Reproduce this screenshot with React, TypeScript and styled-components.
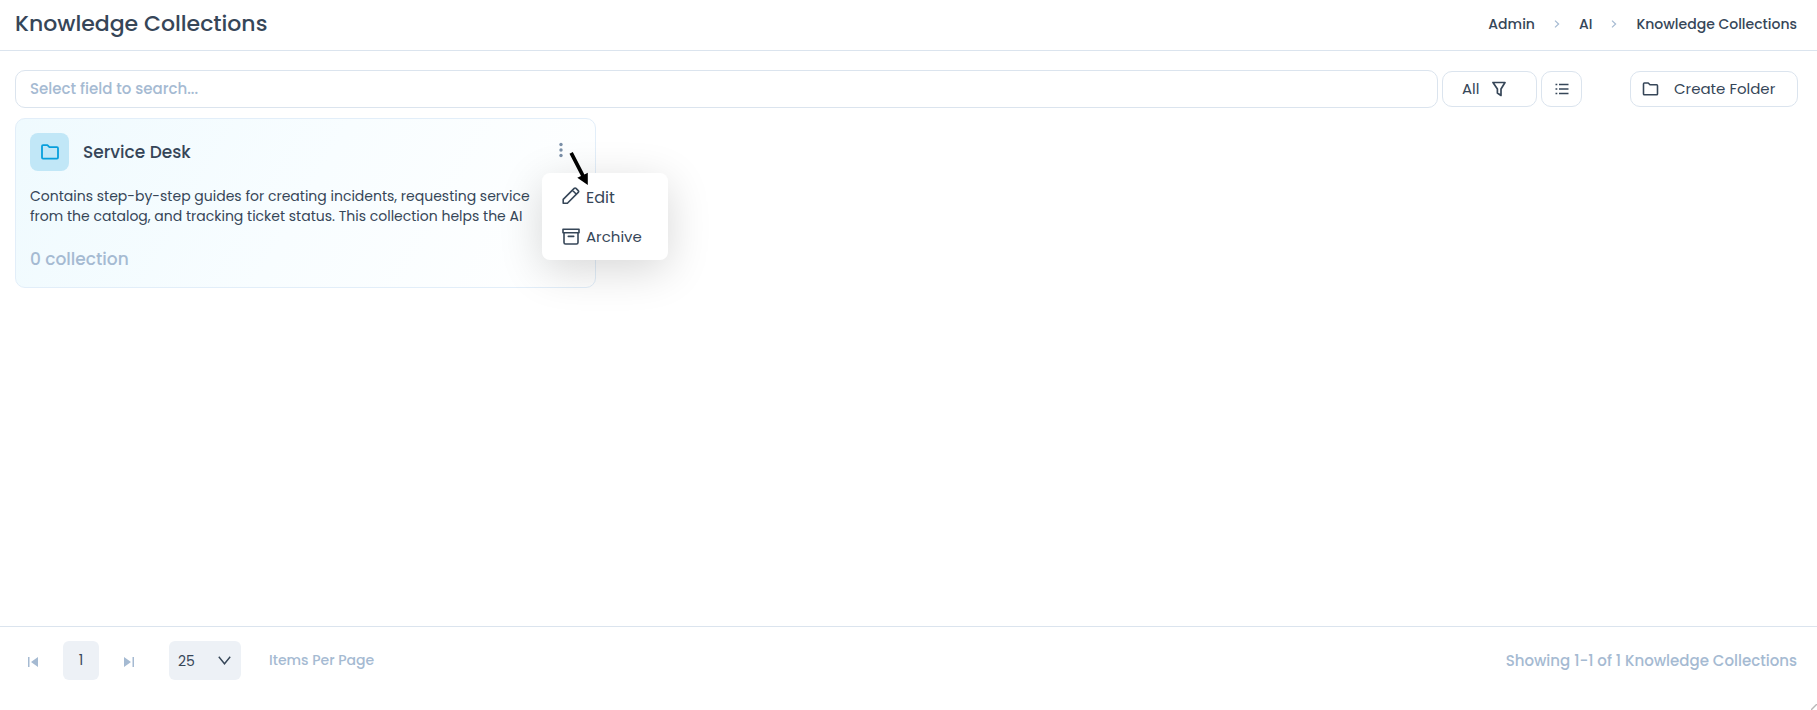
import React from "react";
import styled, { createGlobalStyle, css } from "styled-components";

const ink = "#364658";
const muted = "#a5bad2";
const line = "#dbe4ee";

const GlobalStyle = createGlobalStyle`
  *, *::before, *::after { box-sizing: border-box; }
  body {
    margin: 0;
    background: #fff;
    color: ${ink};
    font-family: Poppins, Inter, "Liberation Sans", sans-serif;
    font-size: 15px;
  }
  button, input, select { font: inherit; color: inherit; }
  button { cursor: pointer; }
  h1, h2, p, ol { margin: 0; padding: 0; }
`;

const Page = styled.div`
  display: flex;
  flex-direction: column;
  min-height: 100vh;
  position: relative;
`;

const Header = styled.header`
  display: flex;
  align-items: center;
  justify-content: space-between;
  height: 51px;
  padding: 0 20px 3px 15px;
  border-bottom: 1px solid ${line};
`;

const Title = styled.h1`
  font-size: 22px;
  font-weight: 500;
  line-height: 32px;
`;

const Crumbs = styled.ol`
  display: flex;
  align-items: center;
  list-style: none;
  font-size: 14px;
  font-weight: 500;
  line-height: 20px;
`;

const Crumb = styled.li`
  display: flex;
  align-items: center;

  a { color: inherit; text-decoration: none; }
  svg { margin: 0 19px; }
`;

const Main = styled.main`
  flex: 1;
  padding: 19px 19px 20px 15px;
`;

const Toolbar = styled.form`
  display: flex;
  align-items: center;
  gap: 4px;
`;

const SearchInput = styled.input`
  flex: 1;
  min-width: 0;
  height: 38px;
  padding: 0 14px 2px;
  border: 1px solid ${line};
  border-radius: 10px;
  background: #fff;
  font-weight: 500;
  outline: none;

  &::placeholder { color: ${muted}; opacity: 1; }
`;

const ToolButton = styled.button<{ $kind: "filter" | "view" | "create" }>`
  display: flex;
  align-items: center;
  height: 36px;
  padding: 0 0 1px;
  border: 1px solid ${line};
  border-radius: 10px;
  background: #fff;

  ${({ $kind }) => $kind === "filter" && css`
    width: 95px;
    padding-left: 19px;
    gap: 12px;
  `}
  ${({ $kind }) => $kind === "view" && css`
    width: 41px;
    justify-content: center;
  `}
  ${({ $kind }) => $kind === "create" && css`
    width: 168px;
    margin-left: 44px;
    padding-left: 11px;
    gap: 15px;
  `}
`;

const CardGrid = styled.section`
  display: grid;
  grid-template-columns: repeat(3, minmax(0, 1fr));
  gap: 20px;
  margin-top: 10px;
`;

const Card = styled.article`
  position: relative;
  height: 170px;
  padding: 14px;
  border: 1px solid #e2eef9;
  border-radius: 10px;
  background: linear-gradient(120deg, #effafe 0%, #f8fdff 50%, #fff 100%);
`;

const CardHead = styled.div`
  display: flex;
  align-items: center;
`;

const FolderTile = styled.span`
  display: flex;
  align-items: center;
  justify-content: center;
  width: 39px;
  height: 38px;
  border-radius: 8px;
  background: #c1e7f7;
  color: #079fdc;
`;

const CardTitle = styled.h2`
  flex: 1;
  margin-left: 14px;
  font-size: 17px;
  font-weight: 500;
  line-height: 24px;
`;

const KebabButton = styled.button`
  display: flex;
  align-items: center;
  justify-content: center;
  width: 20px;
  height: 24px;
  margin: 0 10px 4px 0;
  padding: 0;
  border: 0;
  background: none;
`;

const Description = styled.p`
  margin-top: 15px;
  font-size: 14px;
  line-height: 20px;
  white-space: nowrap;
`;

const Count = styled.p`
  margin-top: 20px;
  color: ${muted};
  font-size: 17px;
  font-weight: 500;
  line-height: 26px;
`;

const Menu = styled.div`
  position: absolute;
  z-index: 1;
  top: 54px;
  right: -73px;
  width: 126px;
  padding: 5px 0 4px;
  border-radius: 8px;
  background: #fff;
  box-shadow: 0 10px 44px rgba(0, 0, 0, 0.16);
`;

const MenuItem = styled.button<{ $highlighted?: boolean }>`
  display: flex;
  align-items: center;
  gap: 6px;
  width: 100%;
  height: 39px;
  padding: 0 0 0 20px;
  border: 0;
  background: none;
  font-size: ${({ $highlighted }) => ($highlighted ? 16 : 15)}px;
`;

const Pointer = styled.svg`
  position: absolute;
  z-index: 2;
  top: 32px;
  right: 3px;
`;

const Footer = styled.footer`
  display: flex;
  align-items: center;
  height: 84px;
  padding: 0 20px 16px 23px;
  border-top: 1px solid ${line};
  color: ${muted};
  font-weight: 500;
`;

const StepButton = styled.button`
  display: flex;
  align-items: center;
  justify-content: center;
  width: 20px;
  height: 20px;
  margin-top: 2px;
  padding: 0;
  border: 0;
  background: none;
`;

const PageButton = styled.button`
  width: 36px;
  height: 39px;
  margin: 0 20px;
  padding: 0;
  border: 0;
  border-radius: 6px;
  background: #edf1f6;
  color: ${ink};
  font-size: 14px;
  font-weight: 400;
`;

const SizeLabel = styled.label`
  display: flex;
  align-items: center;
  flex-direction: row-reverse;
  gap: 28px;
  margin-left: 30px;
  font-size: 14px;
`;

const SelectBox = styled.span`
  display: grid;
  align-items: center;

  > * { grid-area: 1 / 1; }
  svg { justify-self: end; margin-right: 10px; pointer-events: none; }
`;

const SizeSelect = styled.select`
  width: 72px;
  height: 39px;
  padding: 0 9px;
  border: 0;
  border-radius: 6px;
  background: #edf1f6;
  color: ${ink};
  font-weight: 400;
  appearance: none;
`;

const Summary = styled.p`
  margin-left: auto;
`;

const ResizeMark = styled.svg`
  position: absolute;
  right: 0;
  bottom: 0;
`;

const FolderIcon = ({ width = 18, height = 16 }: { width?: number; height?: number }) => (
  <svg width={width} height={height} viewBox="0 0 18 16" fill="none" stroke="currentColor" strokeWidth="1.8" strokeLinejoin="round" aria-hidden="true">
    <path d="M1 2.2Q1 1.2 2 1.2H6.4L8.4 3.2H16Q17 3.2 17 4.2V13.6Q17 14.6 16 14.6H2Q1 14.6 1 13.6Z" />
  </svg>
);

const FunnelIcon = () => (
  <svg width="14" height="16" viewBox="0 0 14 16" fill="none" stroke={ink} strokeWidth="1.7" strokeLinejoin="round" aria-hidden="true">
    <path d="M1 1.5H13L9 8V14.5L5.4 12V8Z" />
  </svg>
);

const ListIcon = () => (
  <svg width="14" height="12" viewBox="0 0 14 12" stroke={ink} strokeWidth="1.6" aria-hidden="true">
    <path d="M4 1.5H13.5M4 6H13.5M4 10.5H13.5M0.5 1.5H2.3M0.5 6H2.3M0.5 10.5H2.3" />
  </svg>
);

const ChevronRight = () => (
  <svg width="6" height="8" viewBox="0 0 6 8" fill="none" stroke={muted} strokeWidth="1.2" aria-hidden="true">
    <path d="M1 .6 4.6 4 1 7.4" />
  </svg>
);

const PencilIcon = () => (
  <svg width="18" height="24" viewBox="0 0 18 24" fill="none" stroke={ink} strokeWidth="1.6" strokeLinejoin="round" aria-hidden="true">
    <path d="M1.2 17.2V13.4L12.2 2.4Q13.1 1.5 14 2.4L16.2 4.6Q17.1 5.5 16.2 6.4L5.4 17.2ZM10.4 4.2 14.4 8.2" />
  </svg>
);

const ArchiveIcon = () => (
  <svg width="18" height="17" viewBox="0 0 18 17" fill="none" stroke={ink} strokeWidth="1.6" strokeLinejoin="round" strokeLinecap="round" aria-hidden="true">
    <path d="M1 1.3H17V4.7H1ZM2 4.7V14.5Q2 16 3.5 16H14.5Q16 16 16 14.5V4.7M6.3 8.4H11.7" />
  </svg>
);

const SkipIcon = ({ forward = false }: { forward?: boolean }) => (
  <svg width="10" height="10" viewBox="0 0 10 10" fill={muted} aria-hidden="true">
    <path d={forward ? "M0 0 7 5 0 10ZM8.5 0H10V10H8.5Z" : "M10 0 3 5 10 10ZM0 0H1.5V10H0Z"} />
  </svg>
);

export default function App() {
  return (
    <>
      <GlobalStyle />
      <Page>
        <Header>
          <Title>Knowledge Collections</Title>
          <nav aria-label="Breadcrumb">
            <Crumbs>
              <Crumb><a href="#admin">Admin</a><ChevronRight /></Crumb>
              <Crumb><a href="#ai">AI</a><ChevronRight /></Crumb>
              <Crumb><a href="#collections" aria-current="page">Knowledge Collections</a></Crumb>
            </Crumbs>
          </nav>
        </Header>

        <Main>
          <Toolbar role="search" onSubmit={(e) => e.preventDefault()}>
            <SearchInput type="text" aria-label="Search" placeholder="Select field to search..." />
            <ToolButton type="button" $kind="filter">All<FunnelIcon /></ToolButton>
            <ToolButton type="button" $kind="view" aria-label="List view"><ListIcon /></ToolButton>
            <ToolButton type="button" $kind="create"><FolderIcon width={17} height={14} />Create Folder</ToolButton>
          </Toolbar>

          <CardGrid>
            <Card>
              <CardHead>
                <FolderTile><FolderIcon /></FolderTile>
                <CardTitle>Service Desk</CardTitle>
                <KebabButton type="button" aria-label="More actions" aria-haspopup="menu" aria-expanded="true">
                  <svg width="4" height="16" viewBox="0 0 4 16" fill="#7b90a8" aria-hidden="true">
                    <circle cx="2" cy="2.5" r="1.7" />
                    <circle cx="2" cy="8" r="1.7" />
                    <circle cx="2" cy="13.5" r="1.7" />
                  </svg>
                </KebabButton>
              </CardHead>
              <Description>
                Contains step-by-step guides for creating incidents, requesting service<br />
                from the catalog, and tracking ticket status. This collection helps the AI
              </Description>
              <Count>0 collection</Count>
              <Menu role="menu">
                <MenuItem type="button" role="menuitem" $highlighted><PencilIcon />Edit</MenuItem>
                <MenuItem type="button" role="menuitem"><ArchiveIcon />Archive</MenuItem>
              </Menu>
              <Pointer width="24" height="36" viewBox="0 0 24 36" aria-hidden="true">
                <path d="M1.5 2.8 4.8 1 16.4 23.5 19.8 21.8V34L9.3 26.8 13 25Z" fill="#000" />
              </Pointer>
            </Card>
          </CardGrid>
        </Main>

        <Footer>
          <StepButton type="button" aria-label="First page"><SkipIcon /></StepButton>
          <PageButton type="button" aria-current="page">1</PageButton>
          <StepButton type="button" aria-label="Last page"><SkipIcon forward /></StepButton>
          <SizeLabel>
            Items Per Page
            <SelectBox>
              <SizeSelect defaultValue="25">
                <option>25</option>
                <option>50</option>
                <option>100</option>
              </SizeSelect>
              <svg width="13" height="9" viewBox="0 0 13 9" fill="none" stroke={ink} strokeWidth="1.4" aria-hidden="true">
                <path d="M.8.8 6.5 7.8 12.2.8" />
              </svg>
            </SelectBox>
          </SizeLabel>
          <Summary>Showing 1-1 of 1 Knowledge Collections</Summary>
        </Footer>
        <ResizeMark width="6" height="6" viewBox="0 0 6 6" stroke="#b8b8b8" strokeWidth="1.4" aria-hidden="true">
          <path d="M0 6 6 0" />
        </ResizeMark>
      </Page>
    </>
  );
}
